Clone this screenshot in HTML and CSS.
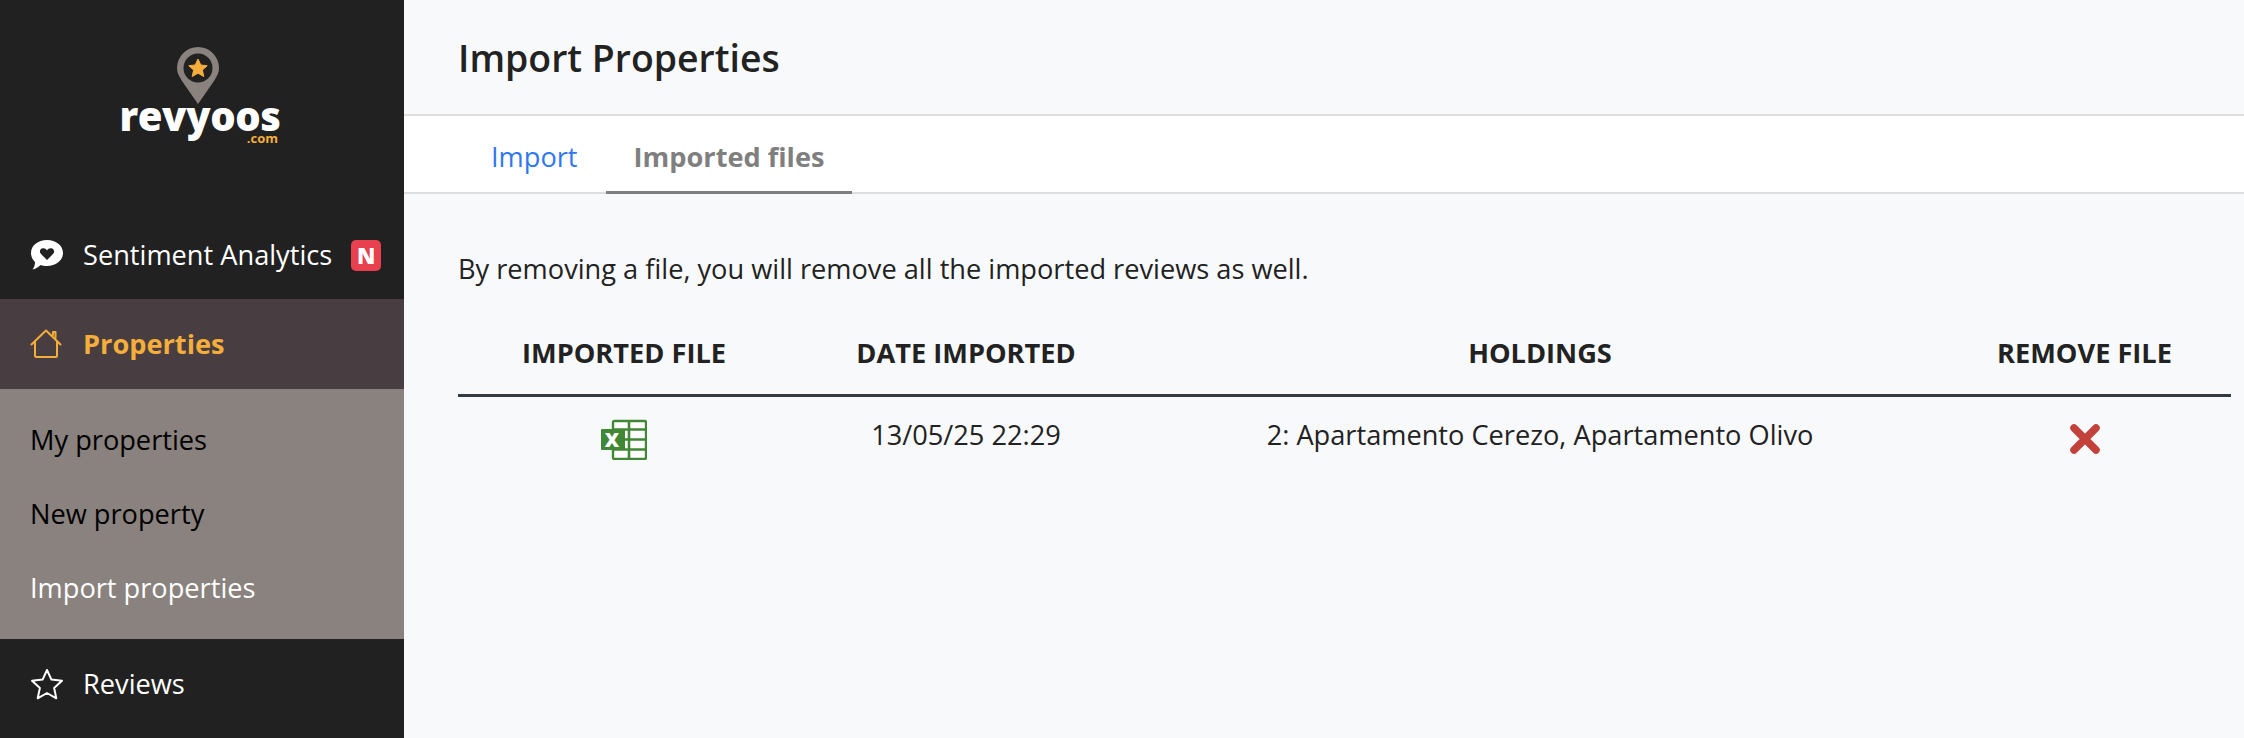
FILE: index.html
```html
<!DOCTYPE html>
<html lang="en">
<head>
<meta charset="utf-8">
<title>Import Properties</title>
<link rel="stylesheet" href="styles.css">
</head>
<body>
<div class="app">
  <aside class="sidebar">
    <div class="logo">
      <svg class="logo-pin" width="42" height="58" viewBox="0 0 42 58">
        <path d="M21 57 L5 34 C2 29 0 26 0 21 A21 21 0 0 1 42 21 C42 26 40 29 37 34 Z" fill="#8a827e"/>
        <circle cx="21" cy="21" r="14.5" fill="#212121"/>
        <path d="M21 12 L23.8 18 L30.2 18.7 L25.4 23.1 L26.8 29.5 L21 26.2 L15.2 29.5 L16.6 23.1 L11.8 18.7 L18.2 18 Z" fill="#f5ae3b" stroke="#f5ae3b" stroke-width="1" stroke-linejoin="round"/>
      </svg>
      <div class="logo-name">revyoos</div>
      <div class="logo-tld">.com</div>
    </div>
    <nav class="nav">
      <a class="nav-item nav-sentiment">
        <svg class="nav-icon" width="34" height="32" viewBox="0 0 34 32">
          <path d="M17 1 C26 1 33 6.500 33 14 C33 21.500 26 27 17 27 C14.500 27 12.500 26.700 10.500 26 C8 28.500 5 30 2.500 30.500 C4 28.500 5 26 5 23 C2.500 20.800 1 17.500 1 14 C1 6.500 8 1 17 1 Z" fill="#fff"/>
          <path d="M17 21 L10.800 14.800 C9 12.800 10 9.500 13 9.300 C14.800 9.200 16.200 10.100 17 11.600 C17.800 10.100 19.200 9.200 21 9.300 C24 9.500 25 12.800 23.200 14.800 Z" fill="#212121"/>
        </svg>
        <span class="nav-label">Sentiment Analytics</span>
        <span class="badge">N</span>
      </a>
      <a class="nav-item nav-active">
        <svg class="nav-icon" width="32" height="30" viewBox="0 0 32 30" fill="none" stroke="#f5ae3b" stroke-width="2" stroke-linejoin="round" stroke-linecap="round">
          <path d="M1.500 15.500 L16 1.500 L30.500 15.500"/>
          <path d="M5 12.500 V26.500 Q5 28 6.500 28 H25.500 Q27 28 27 26.500 V12.500"/>
          <path d="M23 6 V3 H25.500 V9"/>
        </svg>
        <span class="nav-label">Properties</span>
      </a>
      <div class="submenu">
        <a class="sub-item">My properties</a>
        <a class="sub-item">New property</a>
        <a class="sub-item sub-current">Import properties</a>
      </div>
      <a class="nav-item nav-reviews">
        <svg class="nav-icon" width="34" height="32" viewBox="0 0 34 32" fill="none" stroke="#fff" stroke-width="2" stroke-linejoin="round">
          <path d="M17 2 L21.400 11.600 L32 12.800 L24.100 19.900 L26.300 30.300 L17 25 L7.700 30.300 L9.900 19.900 L2 12.800 L12.600 11.600 Z"/>
        </svg>
        <span class="nav-label">Reviews</span>
      </a>
    </nav>
  </aside>
  <main class="main">
    <header class="page-head">
      <h1 class="page-title">Import Properties</h1>
    </header>
    <div class="tabs">
      <a class="tab tab-link">Import</a>
      <a class="tab tab-active">Imported files</a>
    </div>
    <section class="content">
      <p class="notice">By removing a file, you will remove all the imported reviews as well.</p>
      <div class="table">
        <div class="row row-head">
          <div class="cell">IMPORTED FILE</div>
          <div class="cell">DATE IMPORTED</div>
          <div class="cell">HOLDINGS</div>
          <div class="cell">REMOVE FILE</div>
        </div>
        <div class="row row-body">
          <div class="cell cell-icon">
            <svg class="xl" width="46" height="41" viewBox="0 0 46 41">
              <rect x="12" y="2" width="33" height="38" rx="1.500" fill="#fff" stroke="#418836" stroke-width="2.400"/>
              <path d="M12 10.500 H45 M12 20.500 H45 M12 30.500 H45 M28 2 V40" stroke="#418836" stroke-width="2.600" fill="none"/>
              <rect x="0" y="10" width="24" height="21" rx="1" fill="#418836"/>
              <text x="11" y="27.500" class="xl-mark">X</text>
            </svg>
          </div>
          <div class="cell">13/05/25 22:29</div>
          <div class="cell">2: Apartamento Cerezo, Apartamento Olivo</div>
          <div class="cell cell-icon">
            <svg class="remove" width="32" height="32" viewBox="0 0 32 32">
              <path d="M5 5 L27 27 M27 5 L5 27" stroke="#c2413b" stroke-width="7.500" stroke-linecap="round"/>
            </svg>
          </div>
        </div>
      </div>
    </section>
  </main>
</div>
</body>
</html>
```
FILE: styles.css
```css
* { box-sizing: border-box; }
html, body { margin: 0; height: 100%; }
body {
  font-family: "Open Sans", "Noto Sans", sans-serif;
  font-size: 27.2px;
  color: #222;
  background: #f8f9fb;
  overflow: hidden;
}
.app { display: flex; height: 738px; }
.sidebar {
  width: 404px;
  flex: none;
  background: #212121;
  color: #fff;
}
.logo {
  height: 220px;
  padding-top: 47px;
  display: flex;
  flex-direction: column;
  align-items: center;
}
.logo-pin { display: block; margin-right: 8px; }
.logo-name {
  font-size: 40px;
  font-weight: 800;
  line-height: 40px;
  margin-top: -9px;
  margin-right: 4px;
  letter-spacing: -0.4px;
  color: #fff;
}
.logo-tld {
  align-self: flex-end;
  margin-right: 126px;
  font-size: 13px;
  font-weight: 700;
  line-height: 13px;
  margin-top: -4px;
  color: #f5ae3b;
}
.nav-item {
  display: flex;
  align-items: center;
  padding-left: 30px;
  color: #fff;
}
.nav-icon { flex: none; }
.nav-label { margin-left: 19px; line-height: 36px; }
.nav-sentiment { height: 79px; padding-bottom: 9px; }
.badge {
  width: 30px;
  height: 31px;
  margin-left: 19px;
  border-radius: 5px;
  background: #e8404e;
  color: #fff;
  font-size: 22px;
  font-weight: 800;
  line-height: 31px;
  text-align: center;
}
.nav-active {
  height: 90px;
  background: #483e42;
  color: #f5ae3b;
  font-weight: 700;
}
.nav-active .nav-label { margin-left: 21px; }
.submenu {
  height: 250px;
  padding-top: 33px;
  background: #8a827e;
  display: flex;
  flex-direction: column;
  gap: 38px;
}
.sub-item {
  padding-left: 30px;
  line-height: 36px;
  color: #000;
}
.sub-current { color: #fff; }
.nav-reviews { height: 90px; }
.main { flex: 1; min-width: 0; }
.page-head {
  height: 116px;
  padding: 34px 0 0 54px;
  border-bottom: 2px solid #dedede;
}
.page-title {
  margin: 0;
  font-size: 37.400px;
  font-weight: 600;
  line-height: 48px;
}
.tabs {
  height: 78px;
  padding-left: 59px;
  display: flex;
  background: #fff;
  border-bottom: 2px solid #dedede;
}
.tab {
  height: 78px;
  padding: 23px 28px 0;
  line-height: 36px;
}
.tab-link { color: #2f78f0; }
.tab-active {
  color: #7f7f7f;
  font-weight: 700;
  border-bottom: 3px solid #7f7f7f;
}
.content { padding: 0 13px 0 54px; }
.notice {
  margin: 57px 0 0;
  line-height: 36px;
}
.table { margin-top: 34px; }
.row {
  display: grid;
  grid-template-columns: 332px 352px 796px 293px;
  text-align: center;
}
.row-head {
  height: 76px;
  padding-top: 14px;
  line-height: 36px;
  font-weight: 700;
  border-bottom: 3px solid #343a40;
}
.row-body { padding-top: 20px; line-height: 36px; }
.cell-icon { display: flex; justify-content: center; align-items: flex-start; }
.xl { margin-top: 2px; }
.remove { margin-top: 6px; }
.xl-mark {
  font-family: "Open Sans", sans-serif;
  font-size: 20px;
  font-weight: 800;
  fill: #fff;
  text-anchor: middle;
}
```
